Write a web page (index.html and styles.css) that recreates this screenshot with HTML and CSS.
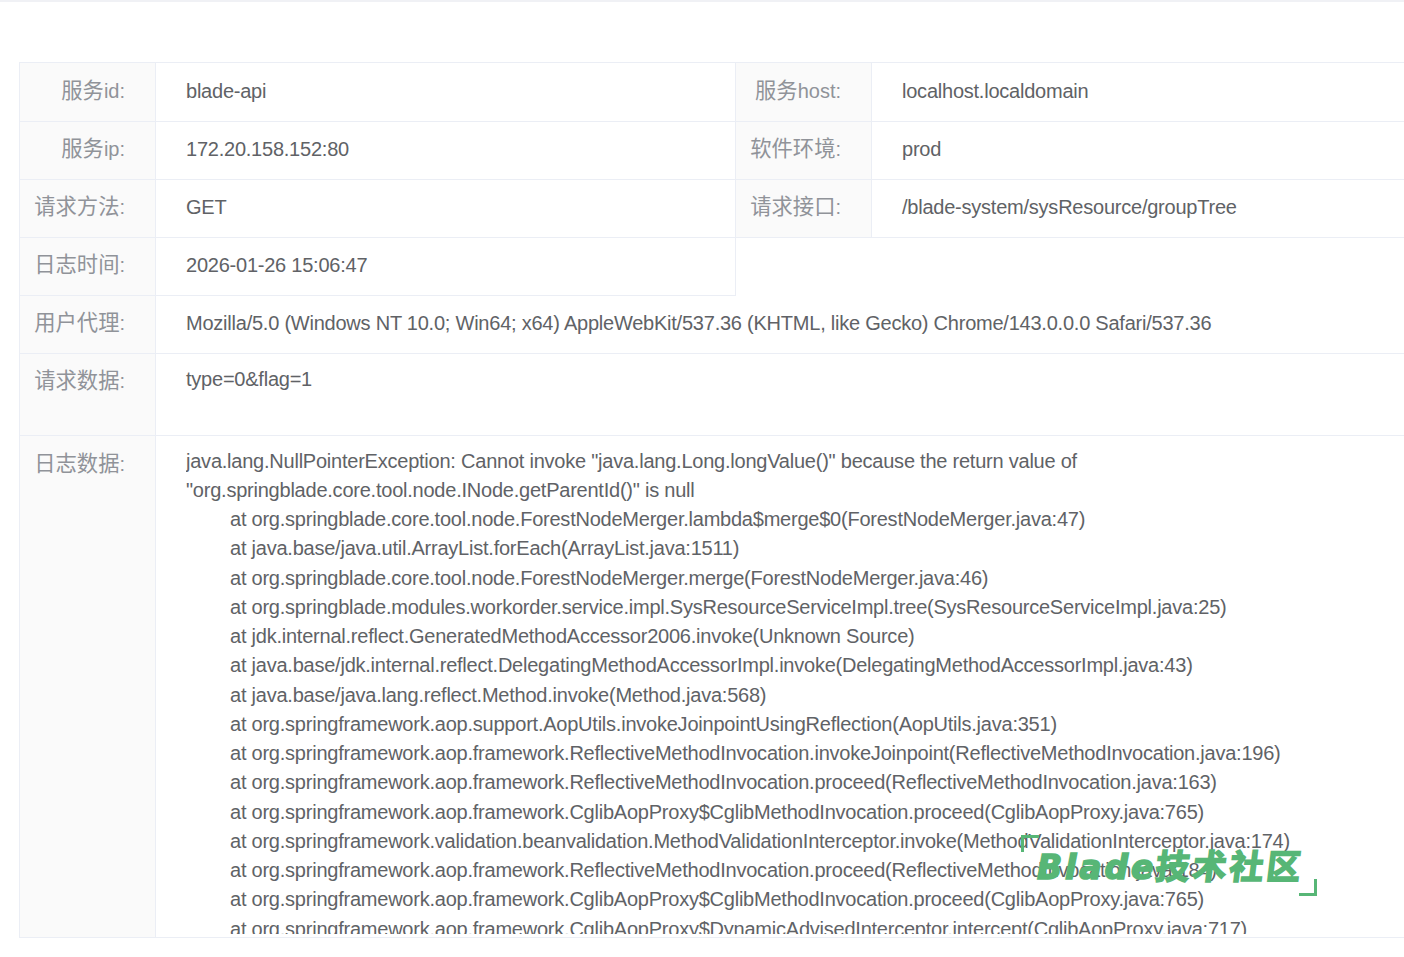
FILE: index.html
```html
<!DOCTYPE html>
<html lang="zh-CN">
<head>
<meta charset="utf-8">
<title>日志详情</title>
<link rel="stylesheet" href="styles.css">
</head>
<body>
<div class="topline"></div>
<main class="panel">
  <div class="sheet">
    <div class="row">
      <div class="label"><span class="zh">服务</span>id:</div><div class="value half">blade-api</div>
      <div class="label"><span class="zh">服务</span>host:</div><div class="value">localhost.localdomain</div>
    </div>
    <div class="row">
      <div class="label"><span class="zh">服务</span>ip:</div><div class="value half">172.20.158.152:80</div>
      <div class="label"><span class="zh">软件环境</span>:</div><div class="value">prod</div>
    </div>
    <div class="row">
      <div class="label"><span class="zh">请求方法</span>:</div><div class="value half">GET</div>
      <div class="label"><span class="zh">请求接口</span>:</div><div class="value">/blade-system/sysResource/groupTree</div>
    </div>
    <div class="row short">
      <div class="label"><span class="zh">日志时间</span>:</div><div class="value half">2026-01-26 15:06:47</div>
    </div>
    <div class="row">
      <div class="label"><span class="zh">用户代理</span>:</div><div class="value">Mozilla/5.0 (Windows NT 10.0; Win64; x64) AppleWebKit/537.36 (KHTML, like Gecko) Chrome/143.0.0.0 Safari/537.36</div>
    </div>
    <div class="row tall">
      <div class="label"><span class="zh">请求数据</span>:</div><div class="value">type=0&amp;flag=1</div>
    </div>
    <div class="row log">
      <div class="label"><span class="zh">日志数据</span>:</div>
      <div class="value"><pre class="trace">java.lang.NullPointerException: Cannot invoke "java.lang.Long.longValue()" because the return value of "org.springblade.core.tool.node.INode.getParentId()" is null
	at org.springblade.core.tool.node.ForestNodeMerger.lambda$merge$0(ForestNodeMerger.java:47)
	at java.base/java.util.ArrayList.forEach(ArrayList.java:1511)
	at org.springblade.core.tool.node.ForestNodeMerger.merge(ForestNodeMerger.java:46)
	at org.springblade.modules.workorder.service.impl.SysResourceServiceImpl.tree(SysResourceServiceImpl.java:25)
	at jdk.internal.reflect.GeneratedMethodAccessor2006.invoke(Unknown Source)
	at java.base/jdk.internal.reflect.DelegatingMethodAccessorImpl.invoke(DelegatingMethodAccessorImpl.java:43)
	at java.base/java.lang.reflect.Method.invoke(Method.java:568)
	at org.springframework.aop.support.AopUtils.invokeJoinpointUsingReflection(AopUtils.java:351)
	at org.springframework.aop.framework.ReflectiveMethodInvocation.invokeJoinpoint(ReflectiveMethodInvocation.java:196)
	at org.springframework.aop.framework.ReflectiveMethodInvocation.proceed(ReflectiveMethodInvocation.java:163)
	at org.springframework.aop.framework.CglibAopProxy$CglibMethodInvocation.proceed(CglibAopProxy.java:765)
	at org.springframework.validation.beanvalidation.MethodValidationInterceptor.invoke(MethodValidationInterceptor.java:174)
	at org.springframework.aop.framework.ReflectiveMethodInvocation.proceed(ReflectiveMethodInvocation.java:184)
	at org.springframework.aop.framework.CglibAopProxy$CglibMethodInvocation.proceed(CglibAopProxy.java:765)
	at org.springframework.aop.framework.CglibAopProxy$DynamicAdvisedInterceptor.intercept(CglibAopProxy.java:717)</pre></div>
    </div>
  </div>
  <div class="watermark">
    <span class="corner tl"></span>
    <span class="mark-text"><span class="mark-en">Blade</span><span class="mark-zh">技术社区</span></span>
    <span class="corner br"></span>
  </div>
</main>
</body>
</html>
```
FILE: styles.css
```css
* { box-sizing: border-box; }
html, body { margin: 0; height: 957px; overflow: hidden; background: #fff; }
body {
  font-family: "Liberation Sans", "Noto Sans CJK SC", sans-serif;
  font-size: 20px;
  letter-spacing: -0.23px;
  color: #606266;
}
.topline { height: 2px; background: #f0f1f5; }
.panel {
  position: relative;
  height: 936px;
  padding: 60px 0 0 19px;
  overflow: hidden;
}
.sheet {
  height: 876px;
  overflow: hidden;
  border-top: 1px solid #ebeef5;
  border-left: 1px solid #ebeef5;
  border-bottom: 1px solid #ebeef5;
}
.row {
  display: flex;
  height: 58px;
  border-bottom: 1px solid #ebeef5;
}
.row:first-child { height: 59px; }
.row:first-child .value { padding-top: 14px; }
.row:first-child .label { padding-top: 14px; }
.row.short { border-bottom: 0; }
.row.tall { height: 82px; }
.row.log { height: 501px; border-bottom: 0; }
.label {
  flex: 0 0 136px;
  padding: 13px 30px 0 0;
  text-align: right;
  line-height: 29px;
  letter-spacing: 0;
  color: #909399;
  background: #fafafa;
  border-right: 1px solid #ebeef5;
}
.zh { font-size: 21.3px; }
.value {
  flex: 1;
  min-width: 0;
  padding: 13px 0 0 30px;
  line-height: 29px;
}
.value.half {
  flex: 0 0 580px;
  border-right: 1px solid #ebeef5;
}
.row.short .value.half { border-bottom: 1px solid #ebeef5; }
.row.short .label { border-bottom: 1px solid #ebeef5; }
.row.tall .value { padding-top: 11px; }
.row.log .label { padding-top: 14px; }
.row.log .value { padding-top: 10.55px; }
.trace {
  margin: 0;
  height: 487px;
  overflow: hidden;
  font: inherit;
  line-height: 29.25px;
  white-space: pre-wrap;
  tab-size: 44px;
  width: 1205px;
}
.watermark {
  position: absolute;
  left: 1021px;
  top: 833px;
  width: 296px;
  height: 61px;
  color: #57b676;
}
.mark-text {
  position: absolute;
  left: 16px;
  top: 13px;
  display: flex;
  align-items: baseline;
  white-space: nowrap;
  letter-spacing: 0;
  -webkit-text-stroke: 1.6px #57b676;
}
.mark-en {
  font-family: "DejaVu Sans", sans-serif;
  font-size: 33px;
  line-height: 34px;
  font-weight: 700;
  font-style: italic;
  letter-spacing: 2.9px;
}
.mark-zh {
  display: inline-block;
  font-family: "Noto Sans CJK SC", sans-serif;
  font-size: 34px;
  line-height: 34px;
  font-weight: 700;
  letter-spacing: 3px;
  transform: skewX(-7deg);
}
.corner { position: absolute; width: 18px; height: 17px; border: 0 solid #57b676; }
.tl { left: 0; top: 0; border-top-width: 3px; border-left-width: 3px; }
.br { right: 0; bottom: 0; border-bottom-width: 3px; border-right-width: 3px; }
```
